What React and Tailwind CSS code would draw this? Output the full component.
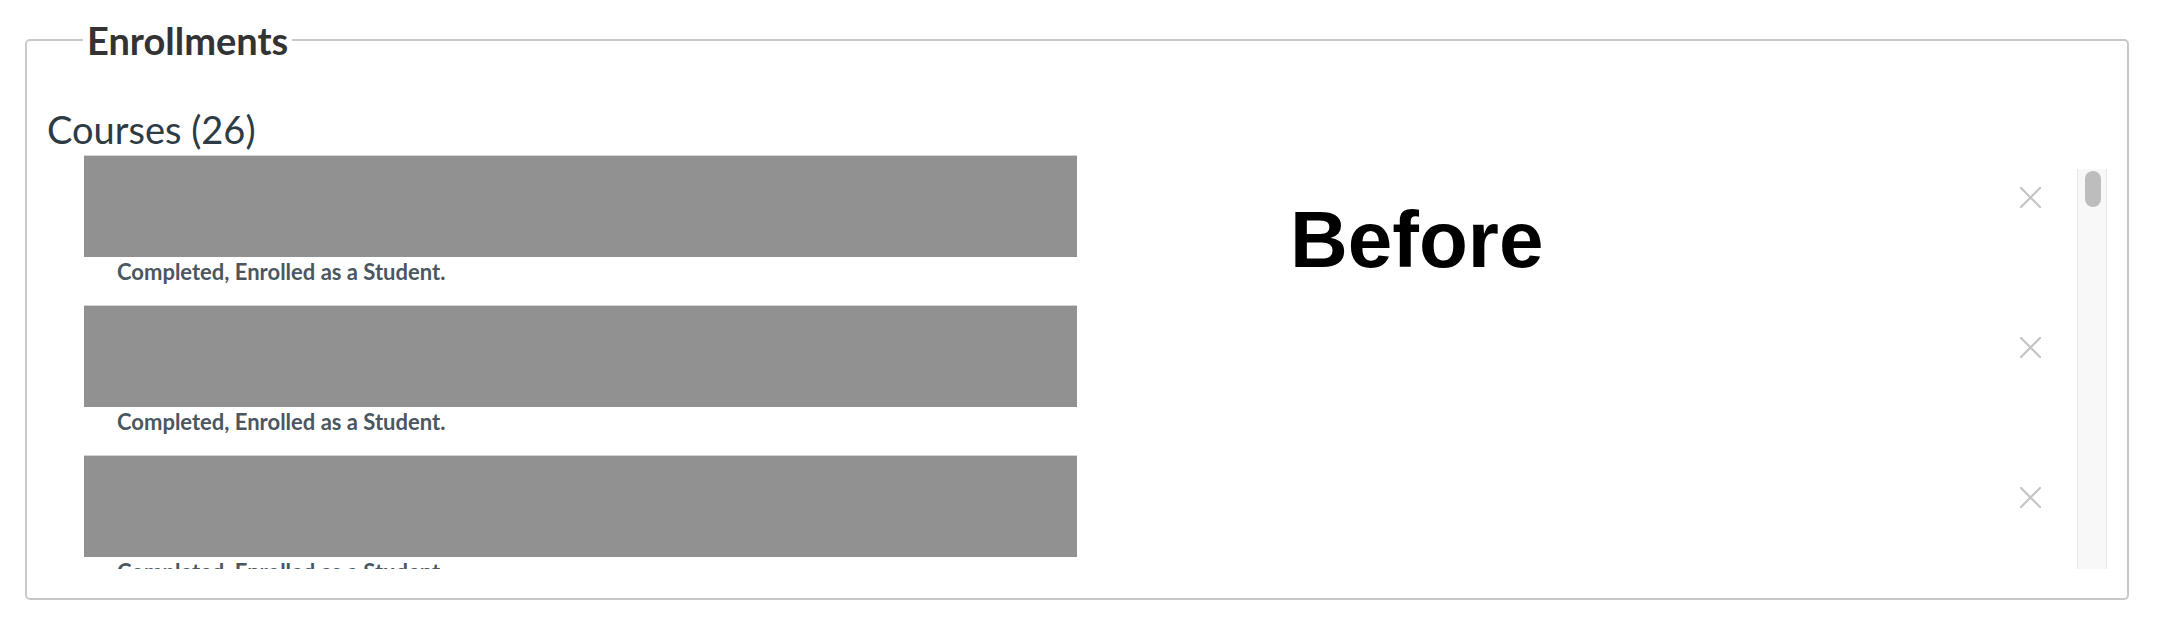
export default function App() {
  const rows = [0, 1, 2];
  return (
    <div className="relative min-h-[642px] bg-white pt-[17px] pl-[25px] pr-[47px] font-[Lato,sans-serif]">
      <fieldset className="rounded-[5px] border-2 border-[#c8c8c8] px-[20px] pb-[29px]">
        <legend className="ml-[36px] px-[4px] text-[38px] font-bold leading-[46px] text-[#333333]">
          Enrollments
        </legend>
        <h2 className="pt-[43px] text-[38px] font-normal leading-[46px] text-[#2d3b45]">
          Courses (26)
        </h2>
        <div className="mt-[3px] flex h-[414px]">
          <ul className="flex-1 overflow-hidden">
            {rows.map((i) => (
              <li key={i} className="flex h-[150px]">
                <div className="flex-1 pl-[37px]">
                  <div className="h-[102px] w-[993px] border-t border-[#d4d4d4] bg-[#919191]"></div>
                  <p className="mt-[3px] pl-[33px] text-[22px] font-bold leading-[24px] text-[#4a5761]">
                    Completed, Enrolled as a Student.
                  </p>
                </div>
                <button
                  type="button"
                  aria-label="Remove"
                  className="mr-[36px] mt-[32px] h-[21px] w-[21px] self-start"
                >
                  <svg width="21" height="21" viewBox="0 0 21 21" fill="none">
                    <path
                      d="M1 1L20 20M20 1L1 20"
                      stroke="#c4c4c4"
                      strokeWidth="2.2"
                      strokeLinecap="round"
                    />
                  </svg>
                </button>
              </li>
            ))}
          </ul>
          <div className="mt-[14px] w-[30px] border-x border-[#e9e9e9] bg-[#f8f8f8] pt-[2px]">
            <div className="ml-[7px] h-[36px] w-[16px] rounded-full bg-[#bdbdbd]"></div>
          </div>
        </div>
      </fieldset>
      <div className="absolute left-[1290px] top-[200px] font-['Liberation_Sans',Arial,sans-serif] text-[80px] font-bold leading-none text-black">
        Before
      </div>
    </div>
  );
}
